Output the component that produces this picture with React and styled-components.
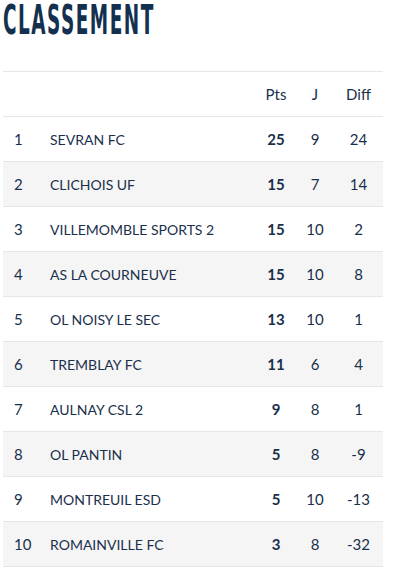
import React from 'react';
import styled, { createGlobalStyle } from 'styled-components';

const GlobalStyle = createGlobalStyle`
  body {
    margin: 0;
    background: #ffffff;
    font-family: Lato, "Open Sans", sans-serif;
    color: #1a2f4b;
  }
`;

const Page = styled.div`
  padding: 0 18px 0 3px;
  width: 380px;
`;

const Header = styled.header`
  height: 71px;
`;

// no real condensed face is installed, so the title is squeezed
const Title = styled.h1`
  display: inline-block;
  margin: 0;
  font-family: "DejaVu Sans Condensed", "DejaVu Sans", sans-serif;
  font-weight: 700;
  font-size: 41px;
  line-height: 48px;
  color: #14304f;
  letter-spacing: 3px;
  white-space: nowrap;
  transform: translateY(-4px) scaleX(0.5);
  transform-origin: left top;
`;

const Table = styled.table`
  width: 380px;
  border-collapse: collapse;
  border-top: 1px solid #e6e6e6;
`;

const Row = styled.tr`
  height: 45px;
  background: ${({ $shaded }) => ($shaded ? '#f5f5f5' : '#ffffff')};
  border-bottom: 1px solid #e6e6e6;
`;

const Cell = styled.td`
  padding: 0;
  font-size: 15px;
  vertical-align: middle;
  text-align: ${({ $align }) => $align || 'left'};
  width: ${({ $width }) => $width || 'auto'};
  font-weight: ${({ $bold }) => ($bold ? 700 : 400)};
  padding-left: ${({ $pad }) => $pad || '0'};
`;

const HeadCell = styled(Cell).attrs({ as: 'th' })`
  font-weight: 400;
`;

const TeamName = styled.span`
  font-size: 14px;
  text-transform: uppercase;
`;

const teams = [
  ['SEVRAN FC', 25, 9, 24],
  ['CLICHOIS UF', 15, 7, 14],
  ['VILLEMOMBLE SPORTS 2', 15, 10, 2],
  ['AS LA COURNEUVE', 15, 10, 8],
  ['OL NOISY LE SEC', 13, 10, 1],
  ['TREMBLAY FC', 11, 6, 4],
  ['AULNAY CSL 2', 9, 8, 1],
  ['OL PANTIN', 5, 8, -9],
  ['MONTREUIL ESD', 5, 10, -13],
  ['ROMAINVILLE FC', 3, 8, -32],
];

export default function App() {
  return (
    <Page>
      <GlobalStyle />
      <Header>
        <Title>CLASSEMENT</Title>
      </Header>
      <Table>
        <thead>
          <Row>
            <HeadCell $width="47px" />
            <HeadCell />
            <HeadCell $width="40px" $align="center">Pts</HeadCell>
            <HeadCell $width="38px" $align="center">J</HeadCell>
            <HeadCell $width="49px" $align="center">Diff</HeadCell>
          </Row>
        </thead>
        <tbody>
          {teams.map(([name, pts, j, diff], i) => (
            <Row key={name} $shaded={i % 2 === 1}>
              <Cell $pad="11px">{i + 1}</Cell>
              <Cell><TeamName>{name}</TeamName></Cell>
              <Cell $align="center" $bold>{pts}</Cell>
              <Cell $align="center">{j}</Cell>
              <Cell $align="center">{diff}</Cell>
            </Row>
          ))}
        </tbody>
      </Table>
    </Page>
  );
}
